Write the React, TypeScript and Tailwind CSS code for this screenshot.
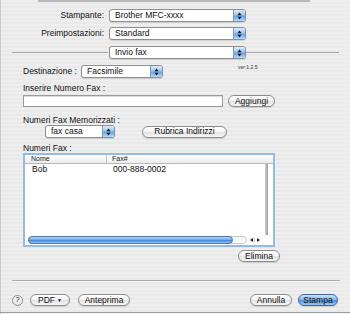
import clsx from "clsx";
import type { ReactNode } from "react";

function UpDown() {
  return (
    <svg width="5" height="8" viewBox="0 0 5 8">
      <path d="M2.5 0.5L4.6 3.2H0.4Z M2.5 7.5L4.6 4.8H0.4Z" fill="#1b1b1b" />
    </svg>
  );
}

function Popup({ text, className }: { text: string; className?: string }) {
  return (
    <div
      className={clsx(
        "flex h-[13px] overflow-hidden rounded-[3px] border border-[#8e8e8e] bg-white shadow-[0_1px_1px_rgba(0,0,0,0.12)]",
        className
      )}
    >
      <span className="flex-1 truncate pl-[5px] text-[8.5px] leading-[11px] text-[#111]">{text}</span>
      <span className="flex w-[12px] items-center justify-center border-l border-[#7c9cc6] bg-[linear-gradient(#dcebfc,#9cc6f1_45%,#63a3e8_55%,#b9d9f8)]">
        <UpDown />
      </span>
    </div>
  );
}

function Btn({ children, className, blue }: { children: ReactNode; className?: string; blue?: boolean }) {
  return (
    <button
      type="button"
      className={clsx(
        "flex h-[12px] items-center justify-center rounded-full border text-[8.5px] leading-none text-[#111] shadow-[0_1px_1px_rgba(0,0,0,0.12)]",
        blue
          ? "border-[#41679f] bg-[linear-gradient(#cfe4fb,#7fb5ec_48%,#4a92e2_52%,#9acbf6)]"
          : "border-[#8c8c8c] bg-[linear-gradient(#ffffff,#f3f3f3_48%,#e2e2e2_52%,#f7f7f7)]",
        className
      )}
    >
      {children}
    </button>
  );
}

export default function App() {
  return (
    <div className="flex h-[314px] w-[350px] flex-col overflow-hidden bg-[repeating-linear-gradient(0deg,#eeeeee_0px,#eeeeee_2px,#e9e9e9_2px,#e9e9e9_4px)] font-['Liberation_Sans',Arial,sans-serif] text-[8.5px] text-[#111] shadow-[inset_1px_0_0_#c9c9c9]">
      {/* sheet top edge */}
      <div className="ml-[38px] h-[2px] w-[272px] bg-[#b9b9b9]" />

      {/* Stampante */}
      <div className="mt-[7px] flex h-[13px] items-center">
        <span className="w-[104px] text-right">Stampante:</span>
        <Popup text="Brother MFC-xxxx" className="ml-[5px] w-[137px]" />
      </div>

      {/* Preimpostazioni */}
      <div className="mt-[5px] flex h-[13px] items-center">
        <span className="w-[104px] text-right">Preimpostazioni:</span>
        <Popup text="Standard" className="ml-[5px] w-[137px]" />
      </div>

      {/* Invio fax */}
      <div className="mt-[6px] flex h-[13px] items-center">
        <div className="ml-[12px] h-px w-[96px] bg-[#a6a6a6]" />
        <Popup text="Invio fax" className="ml-[1px] w-[137px]" />
        <div className="h-px w-[93px] bg-[#a6a6a6]" />
      </div>

      {/* Destinazione */}
      <div className="mt-[6px] flex h-[13px] items-center">
        <span className="ml-[23px] w-[58px]">Destinazione :</span>
        <Popup text="Facsimile" className="w-[82px]" />
        <span className="ml-[75px] -mt-[8px] text-[5px] leading-none text-[#333]">ver:1.2.5</span>
      </div>

      <div className="ml-[23px] mt-[5px] h-[10px] leading-[10px]">Inserire Numero Fax :</div>

      <div className="mt-[1px] flex h-[13px] items-center">
        <div className="ml-[23px] h-[12px] w-[200px] border border-[#9b9b9b] bg-white shadow-[inset_0_1px_1px_rgba(0,0,0,0.15)]" />
        <Btn className="ml-[5px] mt-[1px] w-[47px]">Aggiungi</Btn>
      </div>

      <div className="ml-[23px] mt-[8px] h-[10px] leading-[10px]">Numeri Fax Memorizzati :</div>

      <div className="flex h-[13px] items-center">
        <Popup text="fax casa" className="ml-[45px] w-[70px]" />
        <Btn className="ml-[27px] w-[85px]">Rubrica Indirizzi</Btn>
      </div>

      <div className="ml-[23px] mt-[5px] h-[10px] leading-[10px]">Numeri Fax :</div>

      {/* table */}
      <div className="ml-[23px] flex h-[94px] w-[252px] flex-col border-2 border-[#94bbe7] bg-white">
        <div className="flex h-[9px] border-b border-[#b9b9b9] bg-[linear-gradient(#ffffff,#ececec)] text-[7px] leading-[8px] text-[#222]">
          <span className="w-[82px] border-r border-[#c4c4c4] pl-[6px]">Nome</span>
          <span className="pl-[5px]">Fax#</span>
        </div>
        <div className="flex flex-1">
          <div className="flex-1">
            <div className="flex h-[11px] items-center">
              <span className="w-[83px] pl-[7px]">Bob</span>
              <span className="pl-[5px]">000-888-0002</span>
            </div>
          </div>
          <div className="mr-[5px] w-[3px] bg-[linear-gradient(90deg,#d0d0d0,#9d9d9d)]" />
        </div>
        <div className="flex h-[10px] items-center">
          <div className="ml-[3px] flex h-[8px] w-[219px] items-center rounded-full border border-[#c9c9c9] bg-[linear-gradient(#f4f4f4,#ffffff)]">
            <div className="h-[8px] w-[205px] -ml-px rounded-full border border-[#4f76ad] bg-[linear-gradient(#b5d5f8,#6aa5e6_50%,#4389dc_55%,#8cc0f3)]" />
          </div>
          <div className="ml-[1px] flex h-[8px] w-[15px] items-center">
            <span className="flex w-[7px] justify-center border-r border-[#c4c4c4]">
              <svg width="3" height="4" viewBox="0 0 3 4"><path d="M0 2L3 0V4Z" fill="#222" /></svg>
            </span>
            <span className="flex w-[7px] justify-center">
              <svg width="3" height="4" viewBox="0 0 3 4"><path d="M3 2L0 0V4Z" fill="#222" /></svg>
            </span>
          </div>
        </div>
      </div>

      <div className="mt-[3px] flex">
        <Btn className="ml-[238px] w-[42px]">Elimina</Btn>
      </div>

      <div className="ml-[12px] mt-[18px] h-px w-[328px] bg-[#a9a9a9] shadow-[0_1px_0_#f8f8f8]" />

      {/* bottom buttons */}
      <div className="mt-[13px] flex h-[12px] items-center">
        <span className="ml-[12px] flex h-[11px] w-[11px] items-center justify-center rounded-full border border-[#8c8c8c] bg-[linear-gradient(#ffffff,#e2e2e2)] text-[8px] leading-none">
          ?
        </span>
        <Btn className="ml-[7px] w-[40px] gap-[2px]">
          PDF <span className="text-[5px]">▼</span>
        </Btn>
        <Btn className="ml-[8px] w-[52px]">Anteprima</Btn>
        <Btn className="ml-[120px] w-[42px]">Annulla</Btn>
        <Btn blue className="ml-[6px] w-[40px]">Stampa</Btn>
      </div>

      <div className="flex-1" />
      <div className="mb-[1px] h-px bg-[#9e9e9e]" />
    </div>
  );
}
